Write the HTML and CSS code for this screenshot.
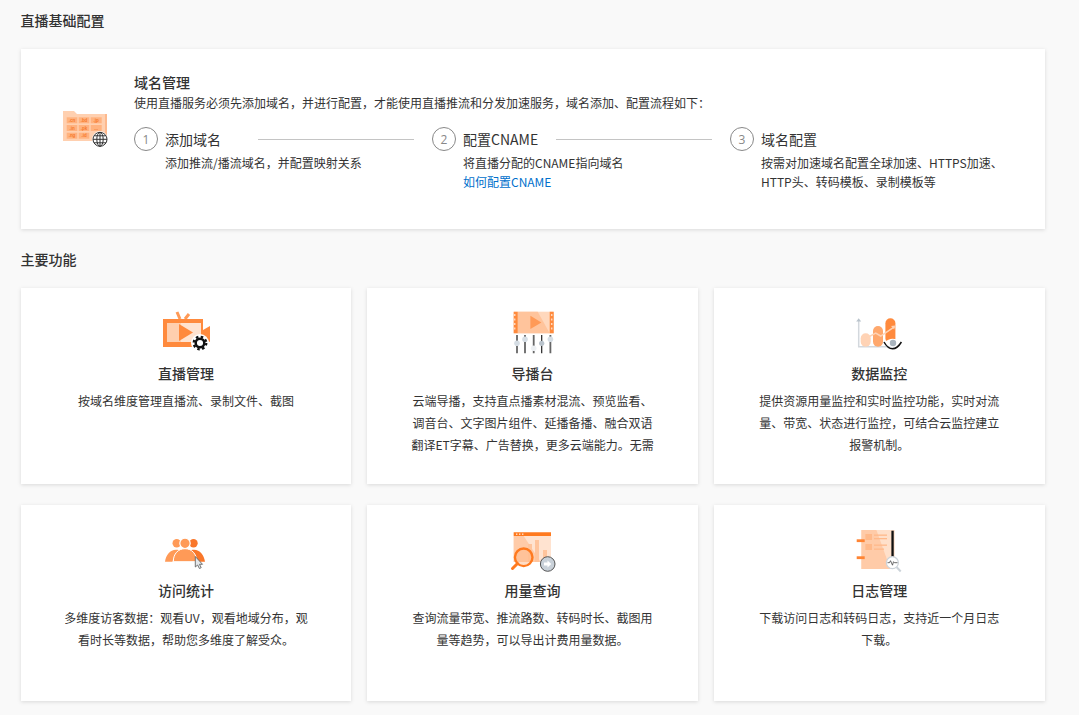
FILE: index.html
```html
<!DOCTYPE html>
<html lang="zh-CN">
<head>
<meta charset="utf-8">
<title>直播基础配置</title>
<link rel="stylesheet" href="styles.css">
</head>
<body>
<main class="page">
  <h2 class="section-title first">直播基础配置</h2>
  <section class="domain-card">
    <div class="domain-icon">
      <svg width="46" height="38" viewBox="0 0 46 38">
        <path d="M40 3h4v27h-4z" fill="#fdb98e"/>
        <path d="M0 0h11l3 3h28v27H0z" fill="#ffd0b0"/>
        <g fill="#ffb27f">
          <rect x="3.700" y="6.300" width="10.600" height="6"/><rect x="15.700" y="6.300" width="10.600" height="6"/><rect x="27.700" y="6.300" width="11" height="6"/>
          <rect x="3.700" y="14" width="10.600" height="6"/><rect x="15.700" y="14" width="10.600" height="6"/><rect x="27.700" y="14" width="11" height="6"/>
          <rect x="3.700" y="21.700" width="10.600" height="6"/><rect x="15.700" y="21.700" width="10.600" height="6"/>
        </g>
        <g class="tld">
          <text x="9" y="11">.cn</text><text x="21" y="11">.bd</text><text x="33.200" y="11">.jp</text>
          <text x="9" y="18.700">.in</text><text x="21" y="18.700">.pk</text><text x="33.200" y="18.700">...</text>
          <text x="9" y="26.400">.ng</text><text x="21" y="26.400">.id</text>
        </g>
        <circle cx="37" cy="28.300" r="8" fill="#fff"/>
        <g fill="none" stroke="#333" stroke-width="1">
          <circle cx="37" cy="28.300" r="7"/><ellipse cx="37" cy="28.300" rx="3.200" ry="7"/>
          <path d="M30 28.300h14M31 24.800h12M31 31.800h12M37 21.300v14"/>
        </g>
      </svg>
    </div>
    <div class="domain-body">
      <h3 class="domain-title">域名管理</h3>
      <p class="domain-intro">使用直播服务必须先添加域名，并进行配置，才能使用直播推流和分发加速服务，域名添加、配置流程如下：</p>
      <ol class="steps">
        <li class="step">
          <div class="step-head"><span class="step-num">1</span><span class="step-name">添加域名</span><span class="step-line"></span></div>
          <p class="step-text">添加推流/播流域名，并配置映射关系</p>
        </li>
        <li class="step">
          <div class="step-head"><span class="step-num">2</span><span class="step-name">配置CNAME</span><span class="step-line"></span></div>
          <p class="step-text">将直播分配的CNAME指向域名<br><a class="link" href="#">如何配置CNAME</a></p>
        </li>
        <li class="step">
          <div class="step-head"><span class="step-num">3</span><span class="step-name">域名配置</span></div>
          <p class="step-text">按需对加速域名配置全球加速、HTTPS加速、<br>HTTP头、转码模板、录制模板等</p>
        </li>
      </ol>
    </div>
  </section>

  <h2 class="section-title">主要功能</h2>
  <section class="features">
    <article class="feature">
      <div class="feature-icon">
        <svg width="50" height="46" viewBox="0 0 50 46">
          <path d="M16 2l3 7M28 4l-4 5" stroke="#ff9a57" stroke-width="3" fill="none"/>
          <rect x="2" y="9" width="40" height="28" fill="#ff8a3d"/>
          <rect x="6" y="13" width="34" height="19" fill="#ffe3d0"/>
          <rect x="6" y="13" width="14" height="19" fill="#ffcfae"/>
          <path d="M18 14l14 8.500-14 8.500z" fill="#ff8a3d"/>
          <path d="M42 20l7-4v16l-7-4z" fill="#ff8a3d"/>
          <circle cx="39" cy="33" r="9" fill="#fff"/>
          <circle cx="39" cy="33" r="4.300" fill="none" stroke="#111" stroke-width="2.500"/>
          <circle cx="39" cy="33" r="6.300" fill="none" stroke="#111" stroke-width="2.200" stroke-dasharray="2.500 2.450"/>
        </svg>
      </div>
      <h3 class="feature-title">直播管理</h3>
      <p class="feature-text">按域名维度管理直播流、录制文件、截图</p>
    </article>
    <article class="feature">
      <div class="feature-icon">
        <svg width="50" height="46" viewBox="0 0 50 46">
          <rect x="5.700" y="1.700" width="40" height="21.600" fill="#ffd8bd"/>
          <path d="M9.700 1.700h20l12 21.600h-32z" fill="#ffc49c"/>
          <path d="M5.700 1.700h4v21.600h-4zM41.700 1.700h4v21.600h-4z" fill="#ff8a3d"/>
          <path d="M6.700 4v17M43.700 4v17" stroke="#ffd8bd" stroke-width="1.500" stroke-dasharray="2 2.500"/>
          <path d="M22.400 5.700l11 6.700-11 6.600z" fill="#ff9a57"/>
          <path d="M9 25v18.300M17 25v18.300M25.700 25v18.300M42.400 25v18.300" stroke="#666" stroke-width="1.800"/>
          <path d="M33.700 25v18.300" stroke="#222" stroke-width="1.200"/>
          <g fill="#d5dde4">
            <circle cx="9" cy="33.300" r="2.800"/><circle cx="17" cy="29.300" r="2.800"/><circle cx="25.700" cy="38.300" r="2.800" fill="#edf0f3"/><circle cx="33.700" cy="33.300" r="2.600" fill="#b9c3cc"/><circle cx="42.400" cy="29.300" r="2.800"/>
          </g>
        </svg>
      </div>
      <h3 class="feature-title">导播台</h3>
      <p class="feature-text">云端导播，支持直点播素材混流、预览监看、调音台、文字图片组件、延播备播、融合双语翻译ET字幕、广告替换，更多云端能力。无需</p>
    </article>
    <article class="feature">
      <div class="feature-icon">
        <svg width="50" height="46" viewBox="0 0 50 46">
          <path d="M4.700 10v26.700h36" stroke="#d3d8dd" stroke-width="1.500" fill="none"/>
          <path d="M2.200 11.500l2.500-3.200 2.500 3.200z" fill="#b9c3cc"/>
          <rect x="6.700" y="23.300" width="10" height="13.400" rx="5" fill="#ffd3b5"/>
          <rect x="19" y="16" width="10" height="20.700" rx="5" fill="#ffa86d"/>
          <rect x="31.400" y="8.300" width="10" height="25" rx="5" fill="#ff8a3d"/>
          <path d="M10.700 29l11-6 5 3 14-9.300" stroke="#ffd3b5" stroke-width="1.500" fill="none"/>
          <path d="M37 16l4-.5-.8 4z" fill="#ffd3b5"/>
          <path d="M30.500 32.500c5-5 11-5 16.500 0-5.500 6-11.500 6-16.500 0z" fill="#fff"/>
          <path d="M30 32c5 9 12 9 17.400 0" stroke="#111" stroke-width="1.500" fill="none"/>
          <circle cx="39" cy="33" r="3.200" fill="#a9b4be"/>
        </svg>
      </div>
      <h3 class="feature-title">数据监控</h3>
      <p class="feature-text">提供资源用量监控和实时监控功能，实时对流量、带宽、状态进行监控，可结合云监控建立报警机制。</p>
    </article>
    <article class="feature">
      <div class="feature-icon">
        <svg width="50" height="46" viewBox="0 0 50 46">
          <circle cx="15.700" cy="16.300" r="4.200" fill="#ff9a57"/>
          <circle cx="32.500" cy="16.300" r="4.200" fill="#f9772a"/>
          <path d="M4 34.700c1-7 5-12 11-12 2 0 3 .5 4 1-4 2.500-6.500 6-7.500 11z" fill="#ff9a57"/>
          <path d="M44 34.700c-1-7-5-12-11-12-2 0-3 .5-4 1 4 2.500 6.500 6 7.500 11z" fill="#f9772a"/>
          <circle cx="24" cy="16.300" r="5.200" fill="#ff9a57" stroke="#fff" stroke-width="1.200"/>
          <path d="M12.300 34.700c0-8 5-13 11.700-13s11.700 5 11.700 13z" fill="#ff9a57" stroke="#fff" stroke-width="1"/>
          <path d="M34.300 29.500v10.500l2.300-2 1.800 3.500 1.800-.8-1.700-3.400h3z" fill="#e4e8eb" stroke="#666" stroke-width=".9"/>
        </svg>
      </div>
      <h3 class="feature-title">访问统计</h3>
      <p class="feature-text">多维度访客数据：观看UV，观看地域分布，观看时长等数据，帮助您多维度了解受众。</p>
    </article>
    <article class="feature">
      <div class="feature-icon">
        <svg width="50" height="46" viewBox="0 0 50 46">
          <rect x="5.700" y="5.300" width="37.300" height="29.700" fill="#ffe3d0"/>
          <path d="M5.700 9h10l17 26h-27z" fill="#ffcba8"/>
          <rect x="5.700" y="5.300" width="37.300" height="3.700" fill="#ff7a1f"/>
          <g fill="#ffe3cf"><rect x="8" y="6.500" width="1.400" height="1.400"/><rect x="11" y="6.500" width="1.400" height="1.400"/><rect x="14" y="6.500" width="1.400" height="1.400"/></g>
          <g fill="#ffc49c"><rect x="20" y="17" width="4" height="18"/><rect x="27" y="13" width="4" height="22"/><rect x="35" y="23" width="4" height="12"/></g>
          <circle cx="15.700" cy="30.300" r="8.800" fill="#ffb98a" fill-opacity=".5" stroke="#ff7a1f" stroke-width="2.400"/>
          <path d="M9.500 36.500l-5 5" stroke="#ff7a1f" stroke-width="3" stroke-linecap="round"/>
          <circle cx="39.700" cy="37" r="7.300" fill="#c9d1d9" stroke="#555" stroke-width="1"/>
          <path d="M36 35.500h3.500v-2l3.800 3.500-3.800 3.500v-2H36z" fill="#fff"/>
        </svg>
      </div>
      <h3 class="feature-title">用量查询</h3>
      <p class="feature-text">查询流量带宽、推流路数、转码时长、截图用量等趋势，可以导出计费用量数据。</p>
    </article>
    <article class="feature">
      <div class="feature-icon">
        <svg width="50" height="46" viewBox="0 0 50 46">
          <rect x="7.400" y="3" width="33.300" height="39" fill="#ffe0ca"/>
          <path d="M7.400 3h15l14 39h-29z" fill="#ffcba8"/>
          <rect x="11.400" y="7" width="6.600" height="6" fill="#ffb98a"/><rect x="11.400" y="17" width="6.600" height="6" fill="#ffb98a"/>
          <g fill="#ffb98a"><rect x="20" y="7.500" width="13" height="1.300"/><rect x="20" y="11" width="13" height="1.300"/><rect x="20" y="17.500" width="13" height="1.300"/><rect x="20" y="21.500" width="10" height="1.300"/></g>
          <rect x="2.700" y="12.300" width="8" height="2.800" fill="#ff8433"/><rect x="2.700" y="29.300" width="8" height="2.800" fill="#ff8433"/>
          <rect x="37.400" y="3.700" width="2.300" height="27.600" fill="#111"/>
          <path d="M42.500 40l4.200 4.500" stroke="#ccd3d9" stroke-width="2"/>
          <circle cx="38.400" cy="35.700" r="6" fill="#fff" stroke="#ccd3d9" stroke-width="1.200"/>
          <path d="M33.500 35.700h2l1-2 2 4.500 1-3.500 1 1h3" stroke="#444" stroke-width=".8" fill="none"/>
        </svg>
      </div>
      <h3 class="feature-title">日志管理</h3>
      <p class="feature-text">下载访问日志和转码日志，支持近一个月日志下载。</p>
    </article>
  </section>
</main>
</body>
</html>
```
FILE: styles.css
```css
* { box-sizing: border-box; }
html, body { margin: 0; padding: 0; }
body {
  background: #f9f9f9;
  color: #333;
  font-family: "Noto Sans CJK SC", "Open Sans", sans-serif;
  font-size: 12px;
  height: 715px;
  overflow: hidden;
}
.page { padding: 0 34.400px 0 20.600px; }
.section-title {
  margin: 0;
  font-size: 14px;
  font-weight: 500;
  line-height: 20px;
  color: #333;
  padding: 20px 0 19px;
}
.section-title.first { padding: 10px 0 19px; }
.domain-card {
  display: flex;
  height: 180px;
  background: #fff;
  box-shadow: 0 1px 4px rgba(0, 0, 0, .13);
  padding: 25px 0 0 42.400px;
}
.domain-icon { width: 71px; padding-top: 37px; flex: none; }
.domain-icon svg { display: block; }
.tld { font-family: "Liberation Sans", sans-serif; font-size: 4.500px; font-weight: 700; fill: #f77a2c; text-anchor: middle; }
.domain-body { flex: 1; min-width: 0; }
.domain-title { margin: -1px 0 0; font-size: 14px; font-weight: 500; line-height: 18px; color: #333; }
.domain-intro { margin: 3px 0 0; line-height: 18px; color: #333; }
.steps { list-style: none; display: flex; margin: 15px 0 0; padding: 0; }
.step { width: 298px; flex: none; }
.step-head { display: flex; align-items: center; height: 24px; }
.step-num {
  width: 24px; height: 24px; flex: none;
  border: 1px solid #888; border-radius: 50%;
  display: flex; align-items: center; justify-content: center;
  font-size: 12px; color: #888;
  font-family: "Open Sans", sans-serif;
  background: #fff;
}
.step-name { margin-left: 7px; font-size: 14px; color: #333; white-space: nowrap; }
.step-line { flex: none; width: 156px; height: 1px; background: #c4c4c4; margin-left: auto; margin-right: 18px; }
.step-text { margin: 2px 0 0 31px; line-height: 19px; color: #333; white-space: nowrap; }
.link { color: #0070cc; text-decoration: none; }
.features { display: grid; grid-template-columns: repeat(3, 1fr); gap: 21px 16px; }
.feature {
  height: 196px;
  background: #fff;
  box-shadow: 0 1px 4px rgba(0, 0, 0, .13);
  padding: 22px 40px 0;
  text-align: center;
  overflow: hidden;
}
.feature-icon { height: 42px; display: flex; justify-content: center; }
.feature-icon svg { display: block; flex: none; }
.feature-title { margin: 11px 0 0; font-size: 14px; font-weight: 500; line-height: 20px; color: #333; }
.feature-text {
  margin: 7px 0 0;
  line-height: 22px;
  color: #333;
  display: -webkit-box;
  -webkit-box-orient: vertical;
  -webkit-line-clamp: 3;
  overflow: hidden;
}
```
